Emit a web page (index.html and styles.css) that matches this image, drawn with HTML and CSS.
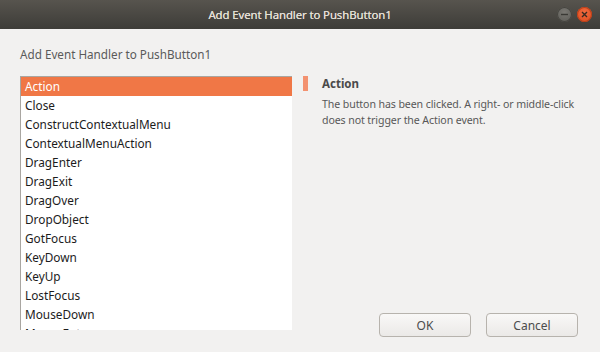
FILE: index.html
```html
<!DOCTYPE html>
<html lang="en">
<head>
  <meta charset="UTF-8" />
  <title>Add Event Handler to PushButton1</title>
  <link rel="stylesheet" href="styles.css">
</head>
<body>

<div class="titlebar">
  <span class="title">Add Event Handler to PushButton1</span>
  <div class="wbuttons">
    <span class="wbtn min">
      <svg width="15" height="15" viewBox="0 0 15 15"><line x1="4" y1="7.5" x2="11" y2="7.5" stroke="#3a3935" stroke-width="1.4"/></svg>
    </span>
    <span class="wbtn close">
      <svg width="15" height="15" viewBox="0 0 15 15"><path d="M5 5 L10 10 M10 5 L5 10" stroke="#3a2a22" stroke-width="1.4"/></svg>
    </span>
  </div>
</div>

<main>
  <h1>Add Event Handler to PushButton1</h1>

  <div class="body">
    <ul class="events">
      <li class="selected">Action</li>
      <li>Close</li>
      <li>ConstructContextualMenu</li>
      <li>ContextualMenuAction</li>
      <li>DragEnter</li>
      <li>DragExit</li>
      <li>DragOver</li>
      <li>DropObject</li>
      <li>GotFocus</li>
      <li>KeyDown</li>
      <li>KeyUp</li>
      <li>LostFocus</li>
      <li>MouseDown</li>
      <li>MouseEnter</li>
    </ul>

    <div class="side">
      <div class="info">
        <span class="marker"></span>
        <div>
          <h2>Action</h2>
          <p>The button has been clicked. A right- or middle-click does not trigger the Action event.</p>
        </div>
      </div>
      <div class="actions">
        <button>OK</button>
        <button>Cancel</button>
      </div>
    </div>
  </div>
</main>

</body>
</html>
```

FILE: styles.css
```css
body {
  margin: 0;
  background: #f2f1f0;
  font-family: 'Noto Sans', sans-serif;
  width: 600px;
  height: 352px;
  overflow: hidden;
}

.titlebar {
  height: 29px;
  background: linear-gradient(#57544e, #3d3c38);
  display: flex;
  align-items: center;
  justify-content: center;
  position: relative;
}

.title {
  color: #e2ded5;
  font-size: 11.4px;
  letter-spacing: -0.1px;
  text-shadow: 0 0 0.4px #e2ded5;
}

.wbuttons {
  position: absolute;
  right: 8px;
  top: 7px;
  display: flex;
  gap: 5px;
}

.wbtn {
  width: 15px;
  height: 15px;
  border-radius: 50%;
  display: block;
}

.wbtn svg {
  display: block;
}

.min {
  background: radial-gradient(circle at 50% 35%, #7a7873, #5a5954);
  box-shadow: inset 0 0 0 1px #45443f;
}

.close {
  background: radial-gradient(circle at 50% 35%, #f26a3f, #dd4a1c);
  box-shadow: inset 0 0 0 1px #b9401a;
}

main {
  padding: 17px 22px 0 20px;
}

h1 {
  margin: 0;
  font-size: 11.7px;
  font-weight: normal;
  color: #5a5a5a;
  line-height: 16px;
}

.body {
  margin-top: 14px;
  display: flex;
}

.events {
  list-style: none;
  margin: 0;
  padding: 0;
  width: 271px;
  height: 253px;
  overflow: hidden;
  background: white;
  border-top: 1px solid #a9a6a1;
  border-left: 1px solid #a9a6a1;
  font-size: 11.8px;
  color: #1c1c1c;
}

.events li {
  height: 19px;
  line-height: 19px;
  padding-left: 4px;
}

.events li.selected {
  background: #f07746;
  color: white;
}

.side {
  flex: 1;
  height: 261px;
  display: flex;
  flex-direction: column;
  padding-left: 11px;
}

.info {
  display: flex;
  gap: 14px;
}

.marker {
  width: 5px;
  height: 15px;
  background: #f39270;
  flex: none;
}

.info h2 {
  margin: 0;
  font-size: 11.5px;
  color: #4a4a4a;
  line-height: 15px;
}

.info p {
  margin: 5px 0 0;
  font-size: 10.6px;
  letter-spacing: -0.1px;
  line-height: 16px;
  color: #585858;
}

.actions {
  margin-top: auto;
  display: flex;
  justify-content: flex-end;
  gap: 15px;
}

button {
  width: 92px;
  height: 24px;
  font-family: inherit;
  font-size: 12px;
  color: #4c4c4c;
  border: 1px solid #b7b3ad;
  border-radius: 4px;
  background: linear-gradient(#f9f8f7, #ebe9e7);
  padding: 0;
}
```
